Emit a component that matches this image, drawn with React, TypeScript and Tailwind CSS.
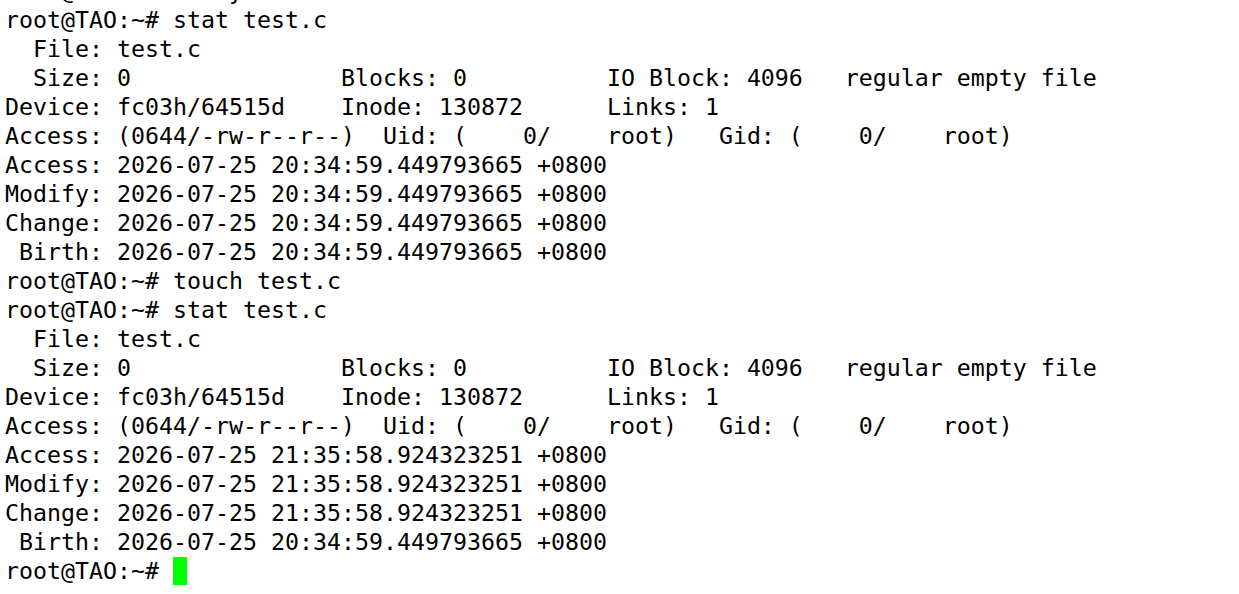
import React from "react";

const lines: string[] = [
  "root@TAO:~# cat y",
  "root@TAO:~# stat test.c",
  "  File: test.c",
  "  Size: 0               Blocks: 0          IO Block: 4096   regular empty file",
  "Device: fc03h/64515d    Inode: 130872      Links: 1",
  "Access: (0644/-rw-r--r--)  Uid: (    0/    root)   Gid: (    0/    root)",
  "Access: 2026-07-25 20:34:59.449793665 +0800",
  "Modify: 2026-07-25 20:34:59.449793665 +0800",
  "Change: 2026-07-25 20:34:59.449793665 +0800",
  " Birth: 2026-07-25 20:34:59.449793665 +0800",
  "root@TAO:~# touch test.c",
  "root@TAO:~# stat test.c",
  "  File: test.c",
  "  Size: 0               Blocks: 0          IO Block: 4096   regular empty file",
  "Device: fc03h/64515d    Inode: 130872      Links: 1",
  "Access: (0644/-rw-r--r--)  Uid: (    0/    root)   Gid: (    0/    root)",
  "Access: 2026-07-25 21:35:58.924323251 +0800",
  "Modify: 2026-07-25 21:35:58.924323251 +0800",
  "Change: 2026-07-25 21:35:58.924323251 +0800",
  " Birth: 2026-07-25 20:34:59.449793665 +0800",
];

export default function App() {
  return (
    <div className="w-[1239px] h-[594px] overflow-hidden bg-white text-black">
      <div
        className="mt-[-24px] pl-[5px] text-[23.25px] leading-[29px] whitespace-pre"
        style={{ fontFamily: '"DejaVu Sans Mono", monospace' }}
      >
        {lines.map((l, i) => (
          <div key={i}>{l}</div>
        ))}
        <div className="flex items-center">
          <span>root@TAO:~# </span>
          <span className="inline-block w-[14px] h-[28px] bg-[#00ff00]" />
        </div>
      </div>
    </div>
  );
}
